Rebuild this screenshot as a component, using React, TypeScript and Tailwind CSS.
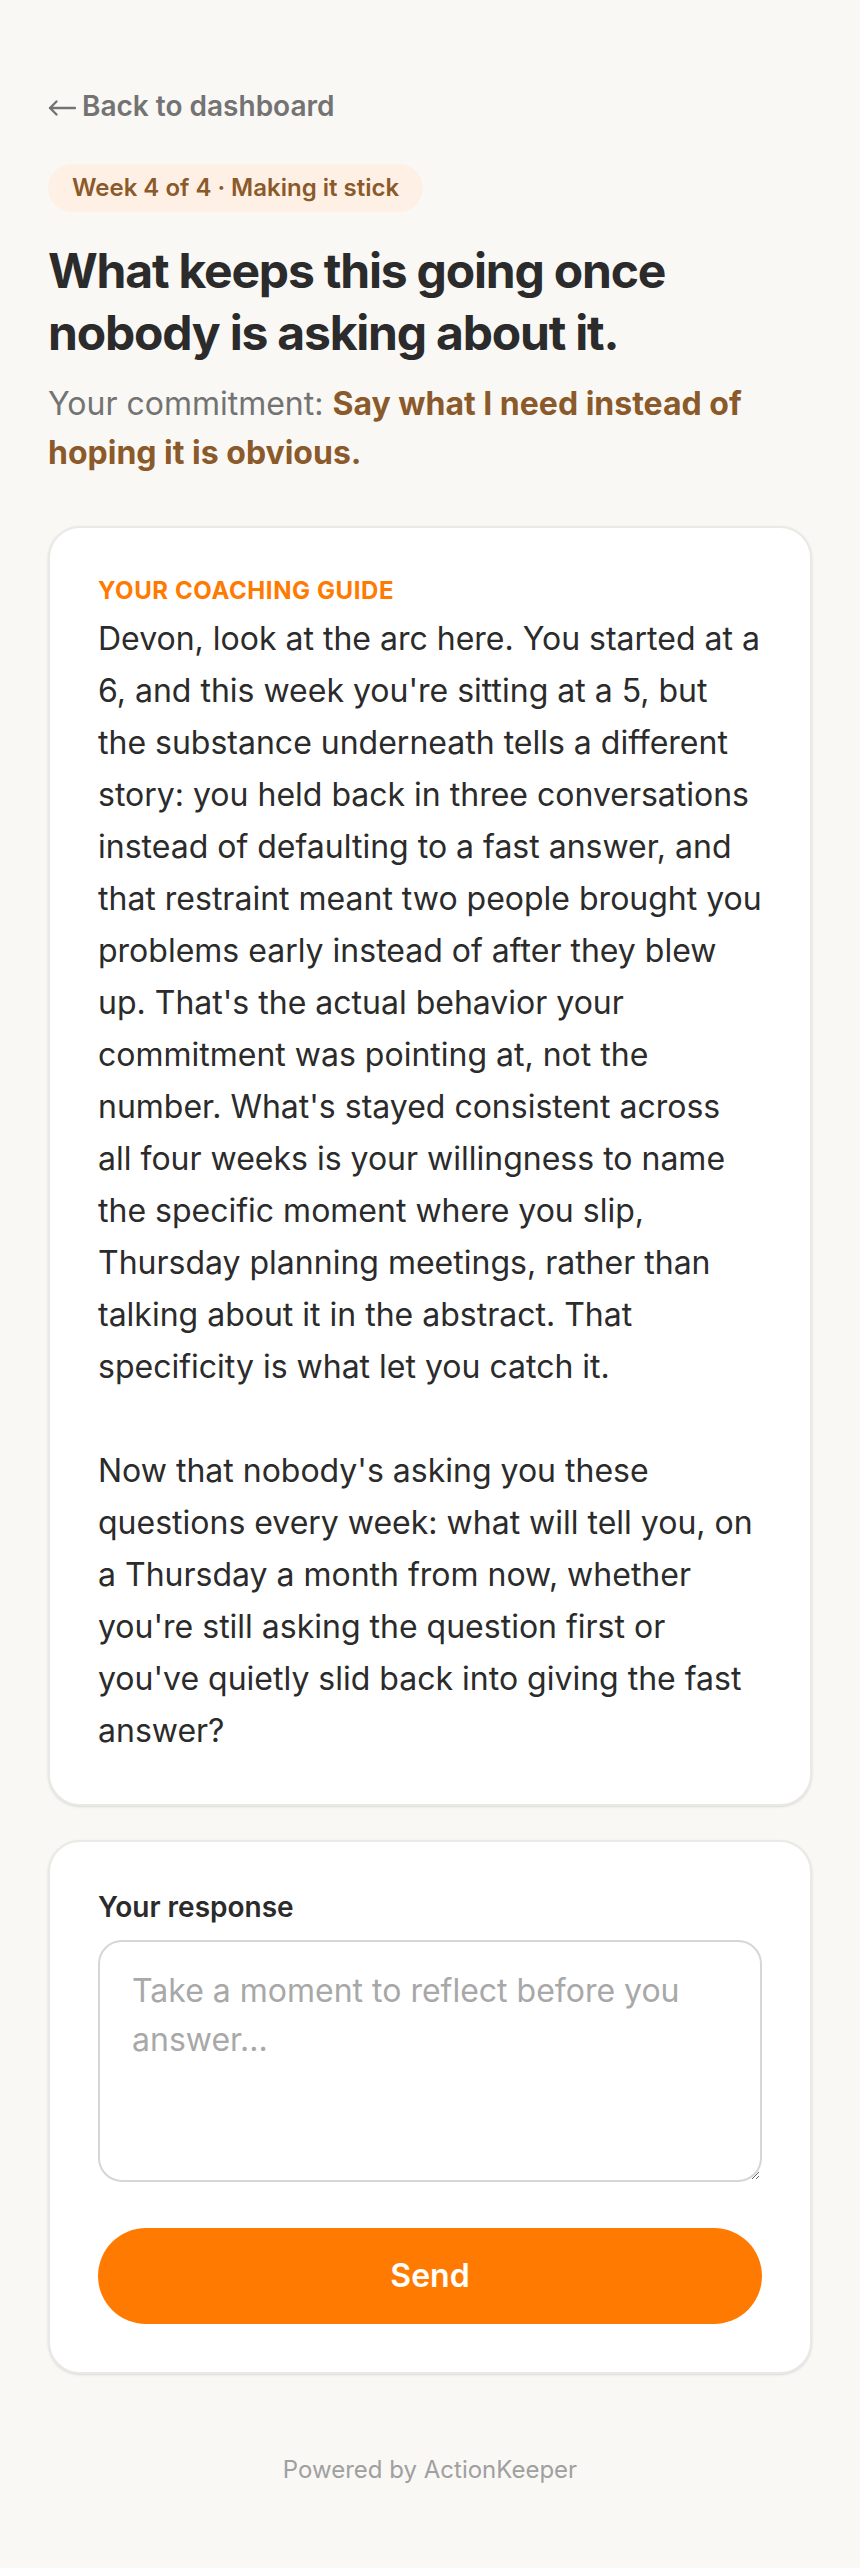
import React from "react";

const body1 =
  "Devon, look at the arc here. You started at a 6, and this week you're sitting at a 5, but the substance underneath tells a different story: you held back in three conversations instead of defaulting to a fast answer, and that restraint meant two people brought you problems early instead of after they blew up. That's the actual behavior your commitment was pointing at, not the number. What's stayed consistent across all four weeks is your willingness to name the specific moment where you slip, Thursday planning meetings, rather than talking about it in the abstract. That specificity is what let you catch it.";
const body2 =
  "Now that nobody's asking you these questions every week: what will tell you, on a Thursday a month from now, whether you're still asking the question first or you've quietly slid back into giving the fast answer?";

export default function App() {
  return (
    <div className="min-h-screen w-full bg-[#f9f8f5] font-['Inter','Noto_Sans',sans-serif] text-[#2b2b2b]">
      <div className="flex flex-col px-[48px] pt-[86px] pb-[80px]">
        <a className="flex items-center gap-[6px] self-start text-[28px] leading-[40px] font-semibold text-[#737373]">
          <svg width="28" height="16" viewBox="0 0 28 16" fill="none" className="mt-[3px]">
            <path d="M2 8H27M2 8L8.5 1.5M2 8L8.5 14.5" stroke="#737373" strokeWidth="2.4" strokeLinecap="round" strokeLinejoin="round" />
          </svg>
          <span>Back to dashboard</span>
        </a>

        <div className="mt-[38px] self-start rounded-full bg-[#fff0e5] px-[24px] py-[8px] text-[24px] leading-[32px] font-semibold text-[#8b5a2b]">
          Week 4 of 4 · Making it stick
        </div>

        <h1 className="mt-[28px] text-[48px] leading-[62px] font-bold tracking-tight text-[#2b2b2b]">
          What keeps this going once nobody is asking about it.
        </h1>

        <p className="mt-[15px] text-[32px] leading-[49px] text-[#737373]">
          Your commitment:{" "}
          <span className="font-bold text-[#8b5a2b]">Say what I need instead of hoping it is obvious.</span>
        </p>

        <div className="mt-[49px] rounded-[32px] border-2 border-[#ebe9e5] bg-white px-[48px] pt-[47px] pb-[47px] shadow-sm">
          <div className="text-[24px] leading-[32px] font-bold uppercase tracking-wide text-[#ff7a00]">
            Your coaching guide
          </div>
          <div className="mt-[6px] text-[32px] leading-[52px] text-[#2b2b2b]">
            <p>{body1}</p>
            <p className="mt-[52px]">{body2}</p>
          </div>
        </div>

        <div className="mt-[34px] rounded-[32px] border-2 border-[#ebe9e5] bg-white px-[48px] pt-[45px] pb-[48px] shadow-sm">
          <div className="text-[28px] leading-[40px] font-semibold text-[#2b2b2b]">Your response</div>
          <textarea
            className="mt-[13px] block h-[242px] w-full rounded-[24px] border-2 border-[#d6d6d6] bg-white px-[32px] py-[24px] text-[32px] leading-[49px] text-[#2b2b2b] placeholder:text-[#a8a8a8] outline-none"
            placeholder="Take a moment to reflect before you answer..."
          />
          <button className="mt-[46px] flex h-[96px] w-full items-center justify-center rounded-full bg-[#ff7a00] text-[32px] font-semibold text-white">
            Send
          </button>
        </div>

        <div className="mt-[80px] text-center text-[24px] leading-[32px] text-[#a0a0a0]">
          Powered by ActionKeeper
        </div>
      </div>
    </div>
  );
}
